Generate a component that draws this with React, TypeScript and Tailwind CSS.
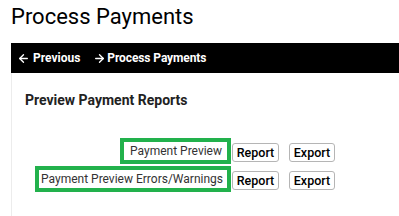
import React from 'react';
import { ArrowLeft, ArrowRight } from 'lucide-react';

const rows = [
    { label: 'Payment Preview', pad: 'pl-[6px] pr-[5px]' },
    { label: 'Payment Preview Errors/Warnings', pad: 'pl-[2px] pr-[4px]' },
];

const SmallButton: React.FC<{ children: React.ReactNode; width: string }> = ({ children, width }) => (
    <button className={`${width} h-[19px] mb-[2px] border border-[#b5b5b5] rounded-[3px] bg-white text-[12.5px] leading-[17px] font-medium text-black`}>
        {children}
    </button>
);

const App: React.FC = () => {
    return (
        <div className="w-[399px] h-[216px] bg-white overflow-hidden pl-[11px] font-['Roboto',sans-serif]">
            <h1 className="pt-[4px] text-[22px] leading-[26px] font-normal text-black">Process Payments</h1>

            <div className="mt-[13px] h-[30px] bg-black flex items-center pl-[6px] text-white text-[12px] font-bold">
                <ArrowLeft size={13} strokeWidth={2.5} className="mr-[3px]" />
                <span>Previous</span>
                <ArrowRight size={13} strokeWidth={2.5} className="ml-[13px] mr-[1px]" />
                <span className="tracking-[-0.1px]">Process Payments</span>
            </div>

            <div className="border-l border-[#ececec] h-[200px] pl-[13px] pt-[19px]">
                <h2 className="text-[14px] leading-[16px] font-bold text-[#222]">Preview Payment Reports</h2>

                <div className="mt-[30px] ml-[9px] grid grid-cols-[197px_auto_auto] gap-y-[2px] items-end w-max">
                    {rows.map(row => (
                        <React.Fragment key={row.label}>
                            <div className="flex justify-end">
                                <div className={`h-[26px] border-4 border-[#22b14c] ${row.pad} flex items-center whitespace-nowrap text-[12px] text-[#333]`}>
                                    {row.label}
                                </div>
                            </div>
                            <div className="ml-[1px]">
                                <SmallButton width="w-[47px]">Report</SmallButton>
                            </div>
                            <div className="ml-[10px]">
                                <SmallButton width="w-[46px]">Export</SmallButton>
                            </div>
                        </React.Fragment>
                    ))}
                </div>
            </div>
        </div>
    );
};

export default App;
